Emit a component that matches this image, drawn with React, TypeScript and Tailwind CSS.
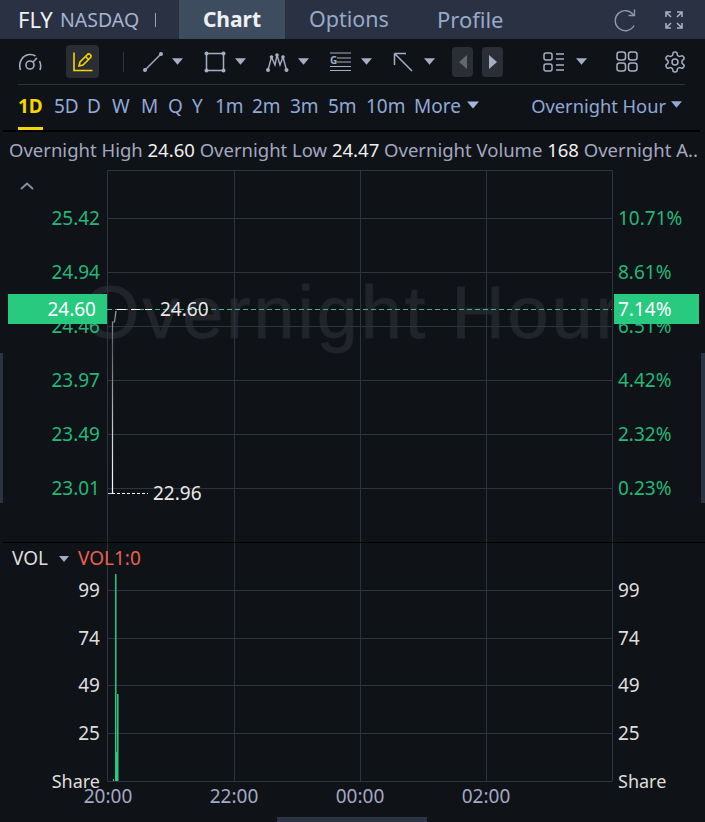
const FONT = "font-['Noto_Sans','Open_Sans',sans-serif]"

const Caret = ({ className = '' }: { className?: string }) => (
  <svg width="11" height="7" viewBox="0 0 10 6" className={className}>
    <path d="M0 0h10L5 6z" fill="currentColor" />
  </svg>
)

const icon = 'text-[#a5aec4]'

function Toolbar() {
  return (
    <div className="flex h-[45px] items-center pl-[18px]">
      <svg width="24" height="22" viewBox="0 0 24 22" fill="none" stroke="currentColor" strokeWidth="1.6" className={`${icon} mr-[24px]`}>
        <path d="M2.500 19C0 12 4 4 11.500 3.500c2.500-.2 4.500.5 6 1.500" />
        <path d="M21.500 10c1.500 3 1.500 6 .5 9" />
        <circle cx="12" cy="14" r="4" />
        <path d="M15 11l4-4" />
      </svg>
      <div className="mr-[24px] flex h-[33px] w-[33px] items-center justify-center rounded bg-[#2a2d33]">
        <svg width="22" height="22" viewBox="0 0 22 22" fill="none" stroke="#f5d400" strokeWidth="1.6">
          <path d="M2 1.500V19.500H20.500" />
          <path d="M7 15l1-4 7.500-7.500a1.500 1.500 0 0 1 2.500 0l.5.5a1.500 1.500 0 0 1 0 2.500L11 14z" />
          <path d="M13.500 5.500l3 3" />
        </svg>
      </div>
      <div className="mr-[18px] h-[20px] w-px bg-[#30363f]" />
      <svg width="22" height="22" viewBox="0 0 22 22" fill="none" stroke="currentColor" strokeWidth="1.500" className={icon}>
        <path d="M3 19L19 3" />
        <circle cx="3" cy="19" r="2" fill="currentColor" stroke="none" />
        <circle cx="19" cy="3" r="2" fill="currentColor" stroke="none" />
      </svg>
      <Caret className={`${icon} ml-[8px] mr-[21px]`} />
      <svg width="22" height="22" viewBox="0 0 22 22" fill="none" stroke="currentColor" strokeWidth="1.500" className={icon}>
        <path d="M2.500 2.500h17v17h-17z" />
        <circle cx="2.500" cy="2.500" r="2" fill="currentColor" stroke="none" />
        <circle cx="19.500" cy="2.500" r="2" fill="currentColor" stroke="none" />
        <circle cx="2.500" cy="19.500" r="2" fill="currentColor" stroke="none" />
        <circle cx="19.500" cy="19.500" r="2" fill="currentColor" stroke="none" />
      </svg>
      <Caret className={`${icon} ml-[9px] mr-[19px]`} />
      <svg width="24" height="22" viewBox="0 0 24 22" fill="none" stroke="currentColor" strokeWidth="1.400" className={icon}>
        <path d="M3 19L6.500 6l3.500 8L12 4l3 10L18 6l3.500 13" />
        <circle cx="3" cy="19" r="2" fill="currentColor" stroke="none" />
        <circle cx="6.500" cy="6" r="1.800" fill="currentColor" stroke="none" />
        <circle cx="12" cy="4" r="1.800" fill="currentColor" stroke="none" />
        <circle cx="18" cy="6" r="1.800" fill="currentColor" stroke="none" />
        <circle cx="21.500" cy="19" r="2" fill="currentColor" stroke="none" />
      </svg>
      <Caret className={`${icon} ml-[9px] mr-[21px]`} />
      <svg width="21" height="20" viewBox="0 0 21 20" className={icon} fill="none" stroke="currentColor" strokeWidth="1.200">
        <path d="M0 1h21M7 6h14M7 10h14M0 14.500h21M0 18.500h21" />
        <text x="0" y="12" fontSize="10" fill="currentColor" stroke="none" fontWeight="700">G</text>
      </svg>
      <Caret className={`${icon} ml-[10px] mr-[21px]`} />
      <svg width="20" height="20" viewBox="0 0 20 20" fill="none" stroke="currentColor" strokeWidth="1.500" className={icon}>
        <path d="M1.500 1.500L19 19M1.500 1.500V13M1.500 1.500H13" />
      </svg>
      <Caret className={`${icon} ml-[11px] mr-[17px]`} />
      <div className="mr-[9px] flex h-[30px] w-[21px] items-center justify-center rounded bg-[#2b2e35]">
        <svg width="8" height="14" viewBox="0 0 8 14"><path d="M8 0v14L0 7z" fill="#626873" /></svg>
      </div>
      <div className="mr-[40px] flex h-[30px] w-[21px] items-center justify-center rounded bg-[#2b2e35]">
        <svg width="8" height="14" viewBox="0 0 8 14"><path d="M0 0v14l8-7z" fill="#a5aec4" /></svg>
      </div>
      <svg width="22" height="20" viewBox="0 0 22 20" fill="none" stroke="currentColor" strokeWidth="1.500" className={icon}>
        <rect x="1" y="1" width="8" height="7" rx="2" />
        <rect x="1" y="12" width="8" height="7" rx="2" />
        <path d="M13 2h8M13 7h8M13 13h8M13 18h8" />
      </svg>
      <Caret className={`${icon} ml-[11px] mr-[29px]`} />
      <svg width="22" height="21" viewBox="0 0 22 21" fill="none" stroke="currentColor" strokeWidth="1.500" className={icon}>
        <rect x="1" y="1" width="8.500" height="8" rx="2.500" />
        <rect x="12.500" y="1" width="8.500" height="8" rx="2.500" />
        <rect x="1" y="12" width="8.500" height="8" rx="2.500" />
        <rect x="12.500" y="12" width="8.500" height="8" rx="2.500" />
      </svg>
      <svg width="24" height="24" viewBox="0 0 24 24" fill="none" stroke="currentColor" strokeWidth="1.500" className={`${icon} ml-[25px]`}>
        <path d="M12.220 2h-.44a2 2 0 0 0-2 2v.18a2 2 0 0 1-1 1.730l-.43.25a2 2 0 0 1-2 0l-.15-.08a2 2 0 0 0-2.730.73l-.22.38a2 2 0 0 0 .73 2.730l.15.100a2 2 0 0 1 1 1.720v.51a2 2 0 0 1-1 1.740l-.15.090a2 2 0 0 0-.73 2.730l.22.380a2 2 0 0 0 2.730.730l.15-.080a2 2 0 0 1 2 0l.43.250a2 2 0 0 1 1 1.730V20a2 2 0 0 0 2 2h.44a2 2 0 0 0 2-2v-.18a2 2 0 0 1 1-1.730l.43-.25a2 2 0 0 1 2 0l.15.080a2 2 0 0 0 2.730-.730l.22-.390a2 2 0 0 0-.73-2.730l-.15-.080a2 2 0 0 1-1-1.740v-.500a2 2 0 0 1 1-1.740l.15-.090a2 2 0 0 0 .73-2.730l-.22-.380a2 2 0 0 0-2.730-.730l-.15.080a2 2 0 0 1-2 0l-.43-.250a2 2 0 0 1-1-1.730V4a2 2 0 0 0-2-2z" />
        <circle cx="12" cy="12" r="3" />
      </svg>
    </div>
  )
}

const periods = [
  ['5D', 'w-[23px]'],
  ['D', 'w-[15px]'],
  ['W', 'w-[19px]'],
  ['M', 'w-[17px]'],
  ['Q', 'w-[14px]'],
  ['Y', 'w-[13px]'],
  ['1m', 'w-[27px]'],
  ['2m', 'w-[28px]'],
  ['3m', 'w-[28px]'],
  ['5m', 'w-[28px]'],
  ['10m', 'w-[38px]'],
]

const left = [['25.42', 218], ['24.94', 272], ['24.46', 326], ['23.97', 380], ['23.49', 434], ['23.01', 488]] as const
const right = [['10.71%', 218], ['8.61%', 272], ['6.51%', 326], ['4.42%', 380], ['2.32%', 434], ['0.23%', 488]] as const
const vol = [['99', 590], ['74', 638], ['49', 685], ['25', 733]] as const
const times = [['20:00', 108], ['22:00', 234], ['00:00', 360], ['02:00', 486]] as const

// the svg viewBox starts at page y 170, so chart numbers read as page pixels
function Chart() {
  const G = '#2c3443'
  return (
    <svg width="705" height="652" viewBox="0 170 705 652" className="block" fontSize="19">
      <defs>
        <clipPath id="plotClip"><rect x="60" y="170" width="552" height="370" /></clipPath>
        <linearGradient id="priceLine" gradientUnits="userSpaceOnUse" x1="0" y1="493" x2="0" y2="310">
          <stop offset="0" stopColor="#ffffff" />
          <stop offset="0.35" stopColor="#c8cacc" />
          <stop offset="0.8" stopColor="#5f6266" />
          <stop offset="1" stopColor="#a5a8aa" />
        </linearGradient>
      </defs>
      <g clipPath="url(#plotClip)">
        <text x="82" y="338" fontSize="74" letterSpacing="2.800" fill="#21252b" stroke="#21252b" strokeWidth="0.8" fontFamily="'Liberation Sans', sans-serif">Overnight Hour</text>
      </g>

      <path d="M107 170.500H612" stroke={G} />
      {left.map(([, y]) => <path key={y} d={`M107 ${y + 0.5}H612`} stroke={G} />)}
      {vol.map(([, y]) => <path key={y} d={`M107 ${y + 0.5}H612`} stroke={G} />)}
      <path d="M107 781.500H612" stroke={G} />
      {[107.5, 234.5, 360.5, 486.5, 612.5].map((x) => (
        <g key={x}>
          <path d={`M${x} 170V542`} stroke={G} />
          <path d={`M${x} 543V781`} stroke={G} />
        </g>
      ))}
      <path d="M3 542.500H705" stroke="#000" />

      {left.map(([t, y]) => <text key={t} x="100" y={y + 7} textAnchor="end" fill="#22b877">{t}</text>)}
      {right.map(([t, y]) => <text key={t} x="618" y={y + 7} fill="#22b877">{t}</text>)}

      <path d="M107 309.500H612" stroke="#3fb884" strokeDasharray="5 3" />
      <path d="M117 309.500H152" stroke="#fff" strokeDasharray="9 5" />
      <rect x="8" y="294" width="99" height="30" fill="#28ca7f" />
      <rect x="614" y="294" width="85" height="30" fill="#28ca7f" />
      <text x="96" y="316" textAnchor="end" fill="#fff">24.60</text>
      <text x="618" y="316" fill="#fff">7.14%</text>
      <text x="160" y="316" fill="#e8e8e8">24.60</text>

      <path d="M112.500 493V322h2l1.500-11" fill="none" stroke="url(#priceLine)" strokeWidth="1.200" />
      <path d="M108 493.500H112" stroke="#d5d5d5" />
      <path d="M112 493.500H148" stroke="#fff" strokeDasharray="3 2" />
      <text x="153" y="500" fill="#e8e8e8">22.96</text>

      <text x="12" y="565" fill="#dedede">VOL</text>
      <path d="M59 556h10l-5 6z" fill="#a5a9c4" />
      <text x="78" y="565" fill="#e8604f">VOL1:0</text>

      {vol.map(([t, y]) => <text key={t} x="100" y={y + 7} textAnchor="end" fill="#dedede">{t}</text>)}
      {vol.map(([t, y]) => <text key={t} x="618" y={y + 7} fill="#dedede">{t}</text>)}
      <text x="100" y="788" textAnchor="end" fontSize="18" fill="#dedede">Share</text>
      <text x="618" y="788" fontSize="18" fill="#dedede">Share</text>

      <rect x="113" y="779" width="1" height="2" fill="#28ca7f" />
      <rect x="115" y="574" width="1.500" height="207" fill="#28ca7f" />
      <rect x="115" y="752" width="3" height="29" fill="#28ca7f" />
      <rect x="117" y="694" width="1.500" height="87" fill="#28ca7f" />

      {times.map(([t, x]) => <text key={t} x={x} y="803" textAnchor="middle" fill="#a3a8c4">{t}</text>)}
    </svg>
  )
}

export default function App() {
  return (
    <div className={`relative h-[822px] w-[705px] overflow-hidden bg-[#0f1217] ${FONT}`}>
      <div className="flex h-[39px] items-center bg-[#2a3142] pl-[18px]">
        <span className="w-[35px] whitespace-nowrap text-[22px] text-[#eef0f4]">FLY</span>
        <span className="ml-[7px] w-[80px] whitespace-nowrap text-[19.500px] text-[#a5b4d0]">NASDAQ</span>
        <div className="ml-[15px] h-[14px] w-px bg-[#9aa3b5]" />
        <div className="ml-[23px] flex h-full w-[106px] items-center justify-center bg-[#3e4c60] text-[21px] font-bold text-[#eef0f4]">Chart</div>
        <span className="ml-[24px] text-[21.500px] text-[#97a9c9]">Options</span>
        <span className="ml-[48px] text-[22px] text-[#97a9c9]">Profile</span>
        <svg width="25" height="24" viewBox="0 0 25 24" fill="none" stroke="#8d99b0" strokeWidth="1.400" className="ml-auto">
          <path d="M20.500 7A10 10 0 1 0 21 17.500" />
          <path d="M21.500 1.500V7.500H15.500" />
        </svg>
        <svg width="20" height="20" viewBox="0 0 20 20" fill="none" stroke="#a5aec4" strokeWidth="1.600" className="ml-[26px] mr-[21px]">
          <path d="M2 7V2h5M2 2l5 5M13 2h5v5M18 2l-5 5M2 13v5h5M2 18l5-5M18 13v5h-5M18 18l-5-5" />
        </svg>
      </div>

      <Toolbar />
      <div className="mx-[18px] h-px w-[667px] bg-[#2c3443]" />

      <div className="relative flex h-[45px] items-center whitespace-nowrap pb-[3px] pl-[18px] pr-[23px] text-[19px] text-[#8fa9d8]">
        <span className="w-[25px] font-bold text-[#f5d400]">1D</span>
        <div className="absolute bottom-0 left-[18px] h-[3px] w-[25px] bg-[#f5d400]" />
        <div className="ml-[11px] flex gap-[10px]">
          {periods.map(([p, w]) => <span key={p} className={w}>{p}</span>)}
        </div>
        <span className="ml-[10px]">More</span>
        <Caret className="mb-[3px] ml-[6px] h-[8px] w-[12px] text-[#a3b6dc]" />
        <span className="ml-auto text-[18.300px]">Overnight Hour</span>
        <Caret className="mb-[3px] ml-[5px]" />
      </div>
      <div className="ml-[3px] h-[2px] w-[697px] bg-black" />

      <div className="flex h-[38px] items-center whitespace-nowrap pb-[2px] pl-[9px] text-[18.500px] text-[#a3a8c0]">
        <span>Overnight High <b className="font-normal text-[#f0f0f0]">24.60</b> Overnight Low <b className="font-normal text-[#f0f0f0]">24.47</b> Overnight Volume <b className="font-normal text-[#f0f0f0]">168</b> Overnight A..</span>
      </div>

      <svg width="14" height="8" viewBox="0 0 14 8" fill="none" stroke="#8c90a8" strokeWidth="1.800" className="absolute left-[20px] top-[182px]">
        <path d="M1 7l6-5.500L13 7" />
      </svg>
      <div className="absolute left-0 top-[353px] h-[150px] w-[3px] bg-[#2c3443]" />
      <div className="absolute right-0 top-[353px] h-[150px] w-[4px] bg-[#2c3443]" />
      <div className="absolute bottom-0 left-[277px] h-[5px] w-[150px] bg-[#2c3443]" />

      <Chart />
    </div>
  )
}
